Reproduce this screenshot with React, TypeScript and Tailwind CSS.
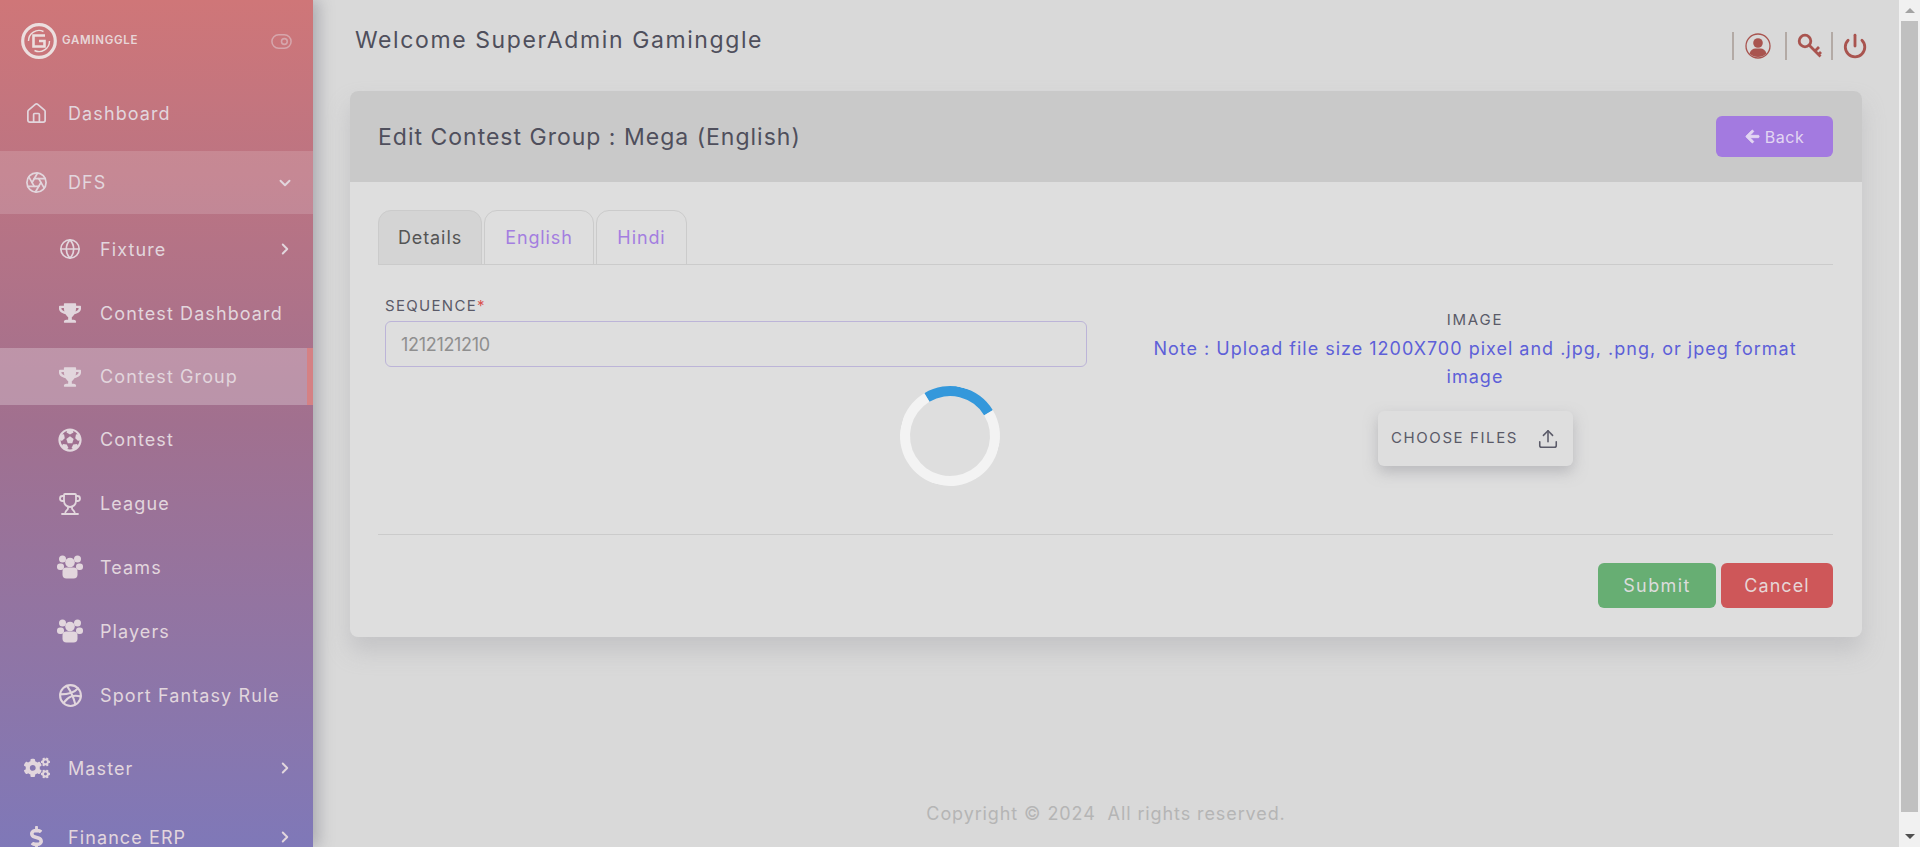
import React from 'react';
import { House, Aperture, Globe, Trophy, ChevronDown, ChevronRight, ToggleRight, Upload, Power } from 'lucide-react';
import { FaTrophy, FaFutbol, FaCogs, FaDollarSign, FaArrowLeft } from 'react-icons/fa';
import { FiDribbble } from 'react-icons/fi';

const font = "font-['Inter','Liberation_Sans',sans-serif]";

const UsersIcon = () => (
  <svg width="26" height="24" viewBox="0 0 26 24" fill="currentColor">
    <circle cx="5.500" cy="4" r="3.500" />
    <circle cx="20.500" cy="4" r="3.500" />
    <circle cx="13" cy="7.500" r="4.800" />
    <rect x="0" y="8.500" width="7" height="6.500" rx="3" />
    <rect x="19" y="8.500" width="7" height="6.500" rx="3" />
    <rect x="5.500" y="12.500" width="15" height="11" rx="4" />
  </svg>
);

const subItems = [
  { label: 'Fixture', icon: <Globe className="w-[22px] h-[22px]" strokeWidth={1.8} />, arrow: true, h: 'h-[64px]' },
  { label: 'Contest Dashboard', icon: <FaTrophy className="w-[22px] h-[20px]" />, h: 'h-[64px]' },
  { label: 'Contest Group', icon: <FaTrophy className="w-[22px] h-[20px]" />, active: true, h: 'h-[57px] my-[3px]' },
  { label: 'Contest', icon: <FaFutbol className="w-[24px] h-[24px]" />, h: 'h-[63.800px]' },
  { label: 'League', icon: <Trophy className="w-[24px] h-[24px]" strokeWidth={1.8} />, h: 'h-[63.800px]' },
  { label: 'Teams', icon: <UsersIcon />, h: 'h-[63.800px]' },
  { label: 'Players', icon: <UsersIcon />, h: 'h-[63.800px]' },
  { label: 'Sport Fantasy Rule', icon: <FiDribbble className="w-[25px] h-[25px]" />, h: 'h-[63.800px]' },
];

const Logo = () => (
  <div className="flex items-center gap-[5px]">
    <svg width="36" height="36" viewBox="0 0 36 36" fill="none">
      <circle cx="18" cy="18" r="16.300" stroke="#ecdfdf" strokeWidth="3.200" />
      <path d="M7.500 18a10.500 10.500 0 0 1 15-9.500M28.500 18a10.500 10.500 0 0 1-15 9.500" stroke="#ecdfdf" strokeWidth="1.400" />
      <path d="M24 12.500H12.500v11H23.500v-5.500h-5.500" stroke="#ecdfdf" strokeWidth="2.600" />
    </svg>
    <span className="text-[11.500px] font-semibold tracking-[0.7px] text-[#e8d6d8]">GAMINGGLE</span>
  </div>
);

const UserCircle = () => (
  <svg width="26" height="26" viewBox="0 0 26 26" fill="#a9544f">
    <circle cx="13" cy="13" r="12" fill="none" stroke="#a9544f" strokeWidth="1.300" />
    <circle cx="13" cy="10" r="4.800" />
    <path d="M4.500 20.500c1-3.600 3.600-5 5.800-5h5.400c2.200 0 4.800 1.400 5.800 5a12 12 0 0 1-17 0z" />
  </svg>
);

const KeyIcon = () => (
  <svg width="26" height="26" viewBox="0 0 26 26" fill="none" stroke="#a9544f" strokeWidth="2.800">
    <circle cx="8" cy="8" r="5.800" />
    <path d="M12.500 12.500l11 11M18 18l4-4M21.500 21.500l2.500-2.500" />
  </svg>
);

const Sidebar = () => (
  <aside className="w-[313px] h-full shrink-0 overflow-hidden bg-gradient-to-b from-[#cf7678] via-[#a1708f] to-[#7f78b8] text-[#e2d6dd] text-[18px] tracking-[1.1px] shadow-[6px_0_14px_rgba(120,120,130,0.45)] z-10">
    <div className="h-[82px] pl-[21px] pr-[20px] flex items-center justify-between">
      <Logo />
      <ToggleRight className="w-[23px] h-[23px] opacity-50" strokeWidth={1.6} />
    </div>
    <div className="h-[62px] pl-[25px] flex items-center">
      <House className="w-[23px] h-[23px] mr-[20px]" strokeWidth={1.8} />
      <span>Dashboard</span>
    </div>
    <div className="mt-[7px] h-[63px] pl-[25px] pr-[19px] flex items-center bg-white/15">
      <Aperture className="w-[23px] h-[23px] mr-[20px]" strokeWidth={1.8} />
      <span className="flex-1">DFS</span>
      <ChevronDown className="w-[18px] h-[18px]" strokeWidth={2.6} />
    </div>
    <div className="mt-[3px]">
      {subItems.map((s) => (
        <div
          key={s.label}
          className={`pl-[57px] flex items-center ${s.h} ${
            s.active ? 'bg-white/25 border-r-[6px] border-[#d58184] pr-[13px]' : 'pr-[19px]'
          }`}
        >
          <span className="w-[26px] mr-[17px] flex justify-center">{s.icon}</span>
          <span className="flex-1 whitespace-nowrap">{s.label}</span>
          {s.arrow && <ChevronRight className="w-[18px] h-[18px]" strokeWidth={2.6} />}
        </div>
      ))}
    </div>
    <div className="mt-[7px] h-[69px] pl-[24px] pr-[19px] flex items-center">
      <FaCogs className="w-[26px] h-[24px] mr-[18px]" />
      <span className="flex-1">Master</span>
      <ChevronRight className="w-[18px] h-[18px]" strokeWidth={2.6} />
    </div>
    <div className="h-[69px] pl-[25px] pr-[19px] flex items-center">
      <FaDollarSign className="w-[23px] h-[23px] mr-[20px]" />
      <span className="flex-1">Finance ERP</span>
      <ChevronRight className="w-[18px] h-[18px]" strokeWidth={2.6} />
    </div>
  </aside>
);

const Tab = ({ label, active, className }: { label: string; active?: boolean; className: string }) => (
  <div
    className={`h-[55px] -mb-px flex items-center justify-center rounded-t-[13px] border border-[#cbcbcb] text-[18px] tracking-[0.9px] ${className} ${
      active ? 'bg-[#d4d4d4] text-[#555555]' : 'text-[#a47ee0]'
    }`}
  >
    {label}
  </div>
);

const Scrollbar = () => (
  <div className="w-[21px] h-full shrink-0 bg-[#f1f1f1] flex flex-col items-center">
    <div className="h-[21px] flex items-center justify-center">
      <div className="w-0 h-0 border-x-[5px] border-x-transparent border-b-[5px] border-b-[#a3a3a3]" />
    </div>
    <div className="w-[17px] h-[791px] bg-[#c0c0c0]" />
    <div className="flex-1" />
    <div className="h-[21px] flex items-center justify-center">
      <div className="w-0 h-0 border-x-[5px] border-x-transparent border-t-[5px] border-t-[#505050]" />
    </div>
  </div>
);

export default function App() {
  return (
    <div className={`h-[847px] w-full flex overflow-hidden bg-[#d9d9d9] ${font}`}>
      <Sidebar />
      <main className="flex-1 min-w-0 h-full pl-[37px] pr-[37px] flex flex-col">
        <header className="h-[91px] shrink-0 flex items-start justify-between">
          <h1 className="mt-[25px] ml-[5px] text-[23px] leading-[30px] tracking-[1.600px] text-[#4f4f5c]">Welcome SuperAdmin Gaminggle</h1>
          <div className="mt-[32px] mr-[-6px] h-[28px] flex items-center text-[#a9544f]">
            <div className="w-[2px] h-[28px] bg-[#b3aaa5]" />
            <div className="ml-[11px]"><UserCircle /></div>
            <div className="w-[2px] h-[28px] bg-[#b3aaa5] ml-[14px]" />
            <div className="ml-[10px]"><KeyIcon /></div>
            <div className="w-[2px] h-[28px] bg-[#b3aaa5] ml-[8px]" />
            <Power className="w-[26px] h-[26px] ml-[9px]" strokeWidth={2.6} />
          </div>
        </header>

        <section className="h-[546px] shrink-0 rounded-[8px] bg-[#dedede] shadow-[0_14px_22px_rgba(170,170,175,0.45)] flex flex-col">
          <div className="h-[91px] shrink-0 rounded-t-[8px] bg-[#c9c9c9] pl-[28px] pr-[29px] flex items-center justify-between">
            <h2 className="pt-px text-[23px] tracking-[1px] text-[#4f4f5c]">Edit Contest Group : Mega (English)</h2>
            <button className="w-[117px] h-[41px] rounded-[6px] bg-[#a37ae0] text-[#e2d6f2] text-[16px] tracking-[0.5px] flex items-center justify-center gap-[5px]">
              <FaArrowLeft className="w-[15px] h-[15px]" stroke="currentColor" strokeWidth={30} />
              Back
            </button>
          </div>

          <div className="relative flex-1 pl-[28px] pr-[29px] pt-[28px] flex flex-col">
            <div className="h-[55px] flex gap-[2px] border-b border-[#cbcbcb]">
              <Tab label="Details" active className="w-[104px]" />
              <Tab label="English" className="w-[110px]" />
              <Tab label="Hindi" className="w-[91px]" />
            </div>

            <div className="flex h-[270px] border-b border-[#cbcbcb]">
              <div className="w-[709px] pl-[7px] pt-[31px] shrink-0">
                <label className="block text-[15px] leading-[20px] tracking-[1.300px] text-[#5a5a68]">
                  SEQUENCE<span className="text-[#d9534f]">*</span>
                </label>
                <input
                  readOnly
                  value="1212121210"
                  className="mt-[5px] w-[702px] h-[46px] px-[15px] rounded-[6px] border border-[#bcb4d8] bg-transparent text-[18px] tracking-[-0.3px] text-[#8f8f8f] outline-none"
                />
              </div>
              <div className="flex-1 pl-[30px] flex flex-col items-center pt-[45px] text-center">
                <div className="text-[15px] leading-[20px] tracking-[1.800px] text-[#5a5a68]">IMAGE</div>
                <p className="mt-[5px] w-[680px] text-[18px] leading-[28px] tracking-[1px] text-[#5d5fd8]">
                  Note : Upload file size 1200X700 pixel and .jpg, .png, or jpeg format image
                </p>
                <button className="mt-[20px] w-[195px] h-[55px] rounded-[6px] bg-[#dedede] shadow-[0_6px_14px_rgba(150,150,155,0.5)] text-[15px] tracking-[1.600px] text-[#5a5a68] flex items-center justify-center gap-[19px]">
                  CHOOSE FILES
                  <Upload className="w-[22px] h-[22px]" strokeWidth={1.7} />
                </button>
              </div>
            </div>

            <div className="mt-[28px] flex justify-end gap-[5px]">
              <button className="w-[118px] h-[45px] rounded-[6px] bg-[#67ae73] text-[#dcdcdc] text-[18px] tracking-[1.400px]">Submit</button>
              <button className="w-[112px] h-[45px] rounded-[6px] bg-[#ce5759] text-[#e6d6d6] text-[18px] tracking-[1.100px]">Cancel</button>
            </div>

            {/* loader sits on top of the form */}
            <div className="absolute left-[550px] top-[204px] w-[100px] h-[100px] rounded-full border-[10px] border-[#f3f3f3] border-t-[#3498db] rotate-[14deg]" />
          </div>
        </section>

        <footer className="mt-[163px] text-center text-[18px] tracking-[0.9px] text-[#b5b5b5]">Copyright © 2024&nbsp; All rights reserved.</footer>
      </main>
      <Scrollbar />
    </div>
  );
}
